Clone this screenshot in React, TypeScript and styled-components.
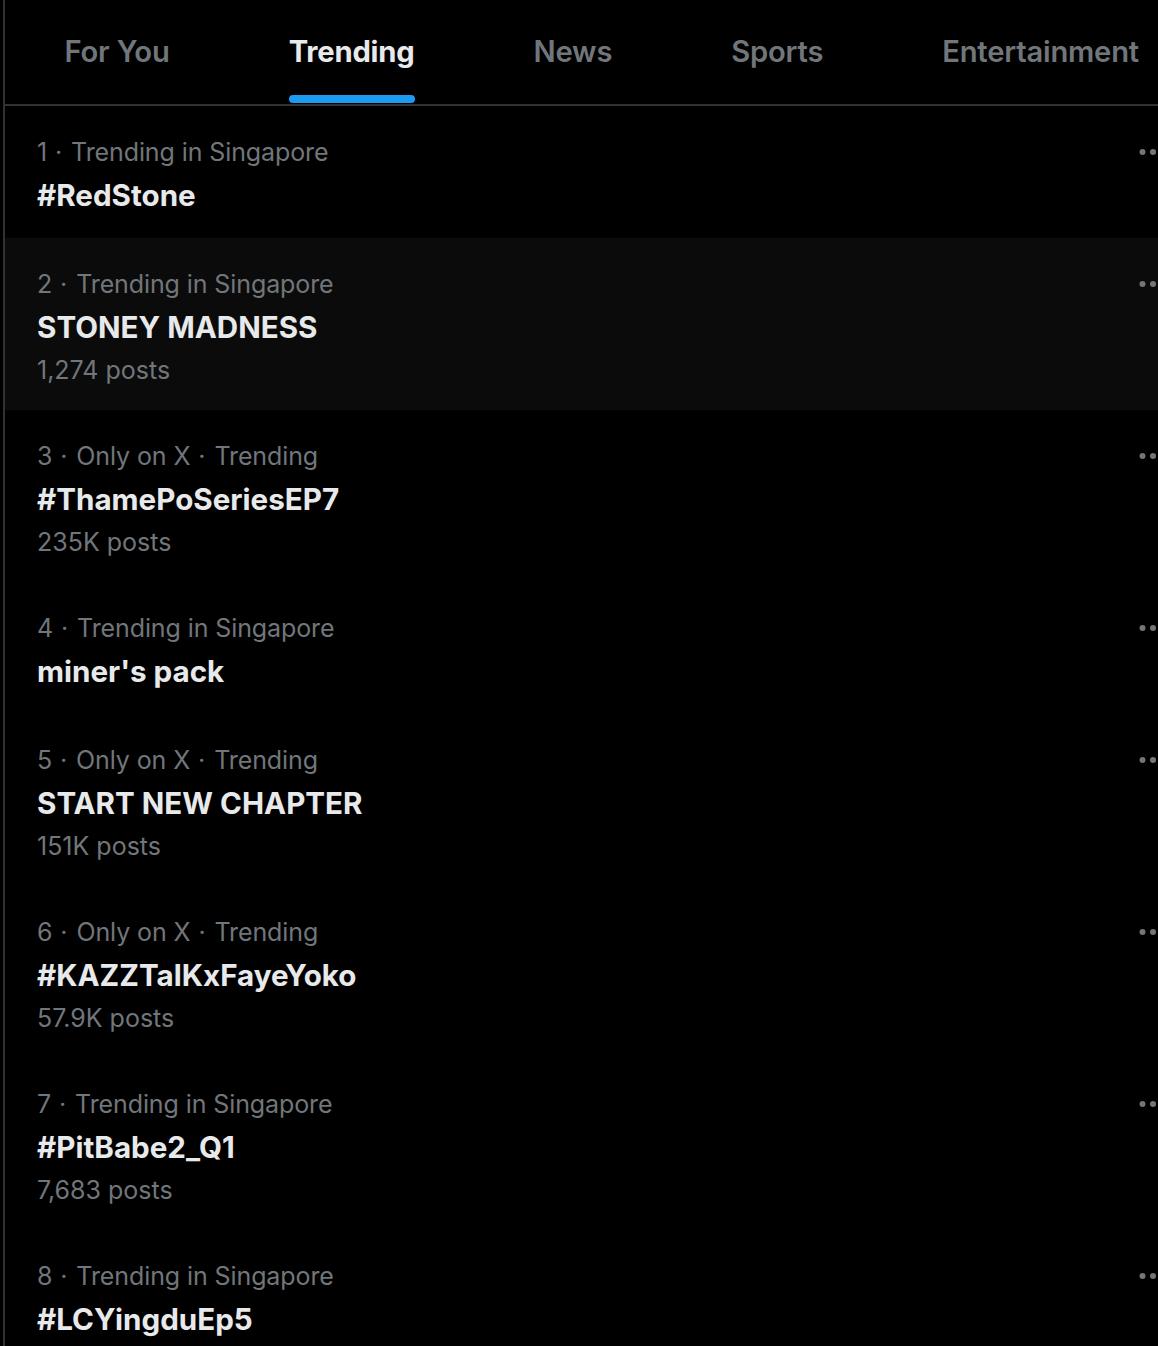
import React from "react";
import styled, { createGlobalStyle } from "styled-components";

const Global = createGlobalStyle`
  html, body { margin: 0; padding: 0; background: #000; }
  body { overflow: hidden; font-family: Inter, "Noto Sans", sans-serif; }
`;

const Page = styled.div`
  width: 1158px;
  height: 1346px;
  overflow: hidden;
  background: #000;
  padding-left: 3px;
  box-sizing: border-box;
`;

const Column = styled.main`
  width: 1200px;
  min-height: 1346px;
  border-left: 2px solid #2f3336;
  display: flex;
  flex-direction: column;
`;

const TabBar = styled.nav`
  display: flex;
  height: 104px;
  border-bottom: 2px solid #2f3336;
`;

const Tab = styled.div<{ $active?: boolean }>`
  position: relative;
  display: flex;
  align-items: center;
  padding: 0 59.5px;
  height: 100%;
  font-size: 29.2px;
  font-weight: ${(p) => (p.$active ? 700 : 600)};
  color: ${(p) => (p.$active ? "#e7e9ea" : "#71767b")};
  letter-spacing: -0.2px;
  white-space: nowrap;
`;

const TabLabel = styled.span`
  position: relative;
  height: 100%;
  display: flex;
  align-items: center;
  padding-bottom: 2px;
  box-sizing: border-box;
`;

const Indicator = styled.span`
  position: absolute;
  left: 0;
  right: 0;
  bottom: 1px;
  height: 8px;
  border-radius: 9999px;
  background: #1d9bf0;
`;

const Row = styled.div<{ $hover?: boolean }>`
  position: relative;
  display: flex;
  flex-direction: column;
  padding: 24px 32px 22px 32px;
  background: ${(p) => (p.$hover ? "#0b0b0b" : "#000")};
`;

const Meta = styled.div`
  font-size: 25px;
  line-height: 44px;
  color: #71767b;
  font-weight: 400;
  letter-spacing: -0.1px;
`;

const Sep = styled.span`
  margin: 0 2px 0 1px;
`;

const Title = styled.div`
  font-size: 29.6px;
  line-height: 42px;
  font-weight: 700;
  color: #e7e9ea;
  letter-spacing: 0;
`;

const Posts = styled.div`
  font-size: 25px;
  line-height: 38px;
  margin-top: 3px;
  margin-bottom: -1px;
  color: #71767b;
  letter-spacing: 0;
`;

const More = styled.svg`
  position: absolute;
  top: 28px;
  right: 34px;
  width: 36px;
  height: 36px;
  fill: #71767b;
`;

const tabs = ["For You", "Trending", "News", "Sports", "Entertainment"];

type Trend = { meta: string[]; title: string; posts?: string };

const trends: Trend[] = [
  { meta: ["1", "Trending in Singapore"], title: "#RedStone" },
  { meta: ["2", "Trending in Singapore"], title: "STONEY MADNESS", posts: "1,274 posts" },
  { meta: ["3", "Only on X", "Trending"], title: "#ThamePoSeriesEP7", posts: "235K posts" },
  { meta: ["4", "Trending in Singapore"], title: "miner's pack" },
  { meta: ["5", "Only on X", "Trending"], title: "START NEW CHAPTER", posts: "151K posts" },
  { meta: ["6", "Only on X", "Trending"], title: "#KAZZTalKxFayeYoko", posts: "57.9K posts" },
  { meta: ["7", "Trending in Singapore"], title: "#PitBabe2_Q1", posts: "7,683 posts" },
  { meta: ["8", "Trending in Singapore"], title: "#LCYingduEp5" },
];

export default function App() {
  return (
    <Page>
      <Global />
      <Column>
        <TabBar>
          {tabs.map((t) => (
            <Tab key={t} $active={t === "Trending"}>
              <TabLabel>
                {t}
                {t === "Trending" && <Indicator />}
              </TabLabel>
            </Tab>
          ))}
        </TabBar>
        {trends.map((tr, i) => (
          <Row key={i} $hover={i === 1}>
            <Meta>
              {tr.meta.map((m, j) => (
                <React.Fragment key={j}>
                  {j > 0 && <Sep> · </Sep>}
                  {m}
                </React.Fragment>
              ))}
            </Meta>
            <Title>{tr.title}</Title>
            {tr.posts && <Posts>{tr.posts}</Posts>}
            <More viewBox="0 0 24 24">
              <circle cx="5" cy="12" r="2" />
              <circle cx="12" cy="12" r="2" />
              <circle cx="19" cy="12" r="2" />
            </More>
          </Row>
        ))}
      </Column>
    </Page>
  );
}
